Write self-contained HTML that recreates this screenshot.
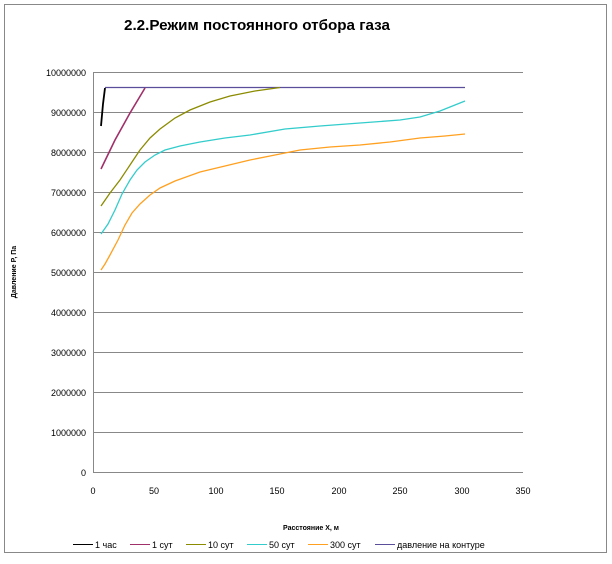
<!DOCTYPE html>
<html><head><meta charset="utf-8"><style>
body{margin:0;background:#fff;}
svg text{font-family:"Liberation Sans",sans-serif;}
</style></head><body>
<svg width="612" height="559" viewBox="0 0 612 559" xmlns="http://www.w3.org/2000/svg">
<rect x="0" y="0" width="612" height="559" fill="#fff"/>
<rect x="4.5" y="4.5" width="602" height="548" fill="#fff" stroke="#888" stroke-width="1"/>
<text x="124" y="30" font-size="15" font-weight="bold" fill="#000" textLength="266" lengthAdjust="spacingAndGlyphs">2.2.Режим постоянного отбора газа</text>
<g stroke="#888" stroke-width="1">
<line x1="93" y1="72.5" x2="523" y2="72.5"/>
<line x1="93" y1="112.5" x2="523" y2="112.5"/>
<line x1="93" y1="152.5" x2="523" y2="152.5"/>
<line x1="93" y1="192.5" x2="523" y2="192.5"/>
<line x1="93" y1="232.5" x2="523" y2="232.5"/>
<line x1="93" y1="272.5" x2="523" y2="272.5"/>
<line x1="93" y1="312.5" x2="523" y2="312.5"/>
<line x1="93" y1="352.5" x2="523" y2="352.5"/>
<line x1="93" y1="392.5" x2="523" y2="392.5"/>
<line x1="93" y1="432.5" x2="523" y2="432.5"/>
<line x1="93" y1="472.5" x2="523" y2="472.5"/>
<line x1="93.5" y1="72" x2="93.5" y2="473"/>
</g>
<g font-size="9" fill="#000" text-anchor="end">
<text x="86" y="76">10000000</text><text x="86" y="116">9000000</text><text x="86" y="156">8000000</text>
<text x="86" y="196">7000000</text><text x="86" y="236">6000000</text><text x="86" y="276">5000000</text>
<text x="86" y="316">4000000</text><text x="86" y="356">3000000</text><text x="86" y="396">2000000</text>
<text x="86" y="436">1000000</text><text x="86" y="476">0</text>
</g>
<g font-size="9" fill="#000" text-anchor="middle">
<text x="93" y="494">0</text><text x="154" y="494">50</text><text x="216" y="494">100</text>
<text x="277" y="494">150</text><text x="339" y="494">200</text><text x="400" y="494">250</text>
<text x="462" y="494">300</text><text x="523" y="494">350</text>
</g>
<text x="16" y="272" font-size="7" font-weight="bold" text-anchor="middle" transform="rotate(-90 16 272)">Давление P, Па</text>
<text x="311" y="530" font-size="7" font-weight="bold" text-anchor="middle">Расстояние X, м</text>
<g fill="none" stroke-width="1.3">
<polyline points="105,87.5 465,87.5" style="stroke:#5a4e9a"/>
<polyline stroke="#000" stroke-width="1.8" points="101,126 103,104 105,88"/>
<polyline stroke="#a0306a" stroke-width="1.6" points="101,169 115,140 130,113 145,88"/>
<polyline stroke="#8b8b00" points="101,206 110,193 120,180 130,165 140,150 150,138 160,129 175,118 190,110 210,102 230,96 255,91 280,87.5"/>
<polyline stroke="#33cccc" points="101,234 108,224 115,210 122,194 130,180 137,170 145,162 155,155 165,150 180,146 200,142 225,138 250,135 285,129 320,126 360,123 400,120 420,117 440,111 465,101"/>
<polyline stroke="#ffa020" points="101,270 105,264 110,255 118,240 125,225 132,213 140,204 150,195 160,188 175,181 200,172 225,166 250,160 275,155 300,150 330,147 360,145 390,142 420,138 445,136 465,134"/>
</g>
<g font-size="9" fill="#000">
<line x1="73" y1="544.5" x2="93" y2="544.5" stroke="#000"/><text x="95" y="548">1 час</text>
<line x1="130" y1="544.5" x2="150" y2="544.5" stroke="#a0306a"/><text x="152" y="548">1 сут</text>
<line x1="186" y1="544.5" x2="206" y2="544.5" stroke="#8b8b00"/><text x="208" y="548">10 сут</text>
<line x1="247" y1="544.5" x2="267" y2="544.5" stroke="#33cccc"/><text x="269" y="548">50 сут</text>
<line x1="308" y1="544.5" x2="328" y2="544.5" stroke="#ffa020"/><text x="330" y="548">300 сут</text>
<line x1="375" y1="544.5" x2="395" y2="544.5" stroke="#5a4e9a"/><text x="397" y="548">давление на контуре</text>
</g>
</svg>
</body></html>
